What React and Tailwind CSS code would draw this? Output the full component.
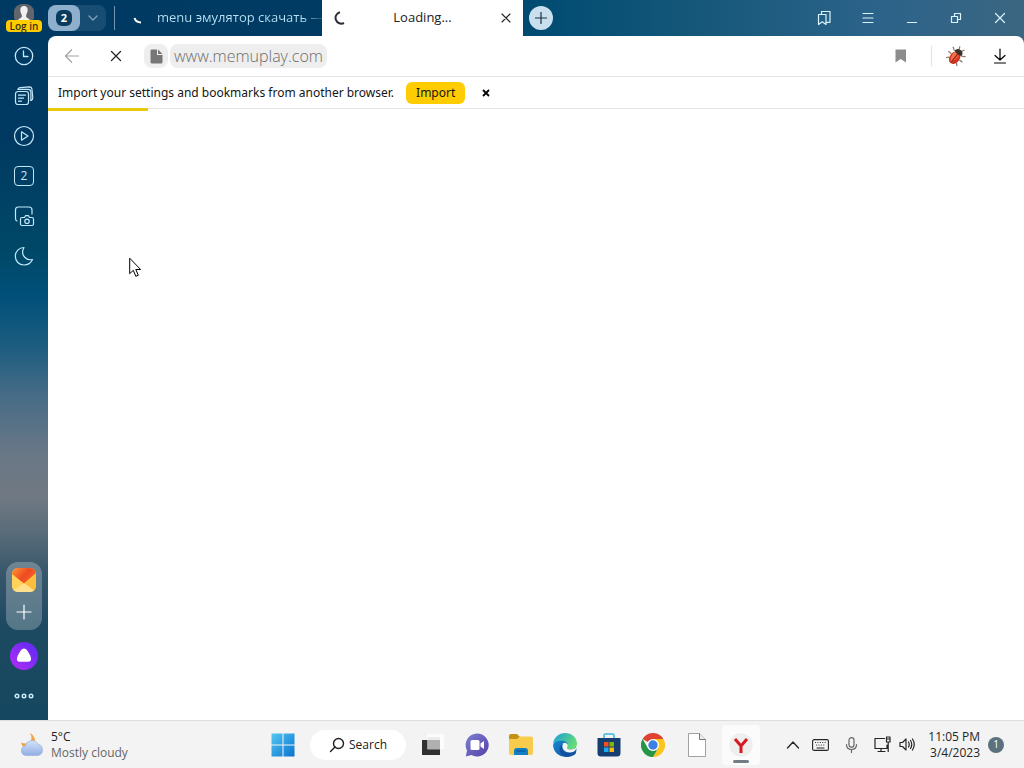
import React from 'react';

const line = { fill: 'none', stroke: 'currentColor', strokeLinecap: 'round', strokeLinejoin: 'round' };

function SideButton({ label, children }) {
  return (
    <button type="button" aria-label={label} className="flex h-10 w-12 items-center justify-center text-[#c4e8fa]">
      {children}
    </button>
  );
}

function Sidebar() {
  return (
    <aside className="flex w-12 shrink-0 flex-col items-center bg-linear-[180deg,#003a63_0%,#003a62_20%,#004867_35%,#00507a_41%,#1c5c7f_48%,#476c87_55%,#697786_63%,#707982_69%,#596b79_74%,#35566a_80%,#1d4a61_87%,#154760_100%]">
      <button type="button" className="flex h-9 w-12 flex-col items-center pt-1">
        <svg width="20" height="16" viewBox="0 0 20 16" aria-hidden="true">
          <path d="M10 0a10 10 0 0 1 8.800 16H1.200A10 10 0 0 1 10 0Z" fill="#62666a" />
          <path d="M10 2c3 0 4 2.500 3.600 5-.3 2-1 3-1.400 3.700V13l4 3H3.800l4-3v-2.300C7.200 10 6.600 9 6.400 7 6 4.500 7 2 10 2Z" fill="#f1f1f1" />
        </svg>
        <span className="h-3 rounded-sm bg-[#ffcc00] px-1 text-[10px] leading-3 font-semibold text-[#35301a]">Log in</span>
      </button>

      <SideButton label="History">
        <svg width="20" height="20" viewBox="0 0 20 20" strokeWidth="1.300" {...line}><circle cx="10" cy="10" r="8.700" /><path d="M9.500 5v5.500H14" /></svg>
      </SideButton>
      <SideButton label="Collections">
        <svg width="20" height="20" viewBox="0 0 20 20" strokeWidth="1.200" {...line}>
          <rect x="1.500" y="5.500" width="13" height="13" rx="2.500" />
          <path d="M4 3.300Q4.300 1.900 6 1.700l9.500-.9q2 0 2.400 2l.9 9q0 2-1.800 2.700" />
          <path d="M4 3.300h10q2.700 0 2.900 2.700v8.500" />
          <path d="M4.500 9.200h7M4.500 12.200h5M4.500 15.200h3" />
        </svg>
      </SideButton>
      <SideButton label="Videos">
        <svg width="22" height="22" viewBox="0 0 22 22" strokeWidth="1.200" {...line}><circle cx="11" cy="11" r="9.500" /><path d="M8.500 6.800v8.400l6.500-4.200Z" /></svg>
      </SideButton>
      <SideButton label="Open tabs">
        <span className="flex size-5 items-center justify-center rounded border border-[#c4e8fa] text-xs">2</span>
      </SideButton>
      <SideButton label="Screenshot">
        <svg width="22" height="22" viewBox="0 0 22 22" strokeWidth="1.200" {...line}>
          <path d="M4 16q-1.500-.5-1.500-2.500V5q0-3 3-3H16q3 0 3 3v4" />
          <path d="M9 12.500h2.500l1-1.800h3l1 1.800H19q1.500 0 1.500 1.500v5q0 1.500-1.500 1.500H9Q7.500 20.500 7.500 19v-5q0-1.500 1.500-1.500Z" />
          <circle cx="14" cy="16.300" r="2.200" />
        </svg>
      </SideButton>
      <SideButton label="Dark mode">
        <svg width="20" height="20" viewBox="0 0 20 20" strokeWidth="1.200" {...line}><path d="M10 1.500C8 5 8.300 8.500 10.500 11s5 3.200 8 2.500C17 16.800 13.800 19 10 19c-5 0-8.700-3.800-8.700-8.700C1.300 5.500 5 1.500 10 1.500Z" /></svg>
      </SideButton>

      <div className="mt-auto flex w-9 flex-col items-center rounded-xl bg-white/25 pt-1.5">
        <button type="button" aria-label="Mail">
          <svg width="24" height="24" viewBox="0 0 24 24">
            <defs>
              <linearGradient id="flap" x1="0" y1="0" x2="1" y2=".6"><stop offset="0" stopColor="#ff9635" /><stop offset=".6" stopColor="#ef4a20" /><stop offset="1" stopColor="#f06a2c" /></linearGradient>
              <clipPath id="mailclip"><rect width="24" height="24" rx="6" /></clipPath>
            </defs>
            <g clipPath="url(#mailclip)">
              <rect width="24" height="24" fill="#ffc53c" />
              <path d="M0 24 12 13l12 11Z" fill="#ffe08c" />
              <path d="M0 6 12 15 0 24Z" fill="#ffd25a" />
              <path d="M24 6 12 15l12 9Z" fill="#ffbd3d" />
              <path d="M0 0h24v5L12 15.500 0 6Z" fill="url(#flap)" />
            </g>
          </svg>
        </button>
        <button type="button" aria-label="Add panel" className="flex h-9.5 w-9 items-center justify-center pt-0.5 text-white">
          <svg width="16" height="16" viewBox="0 0 16 16" strokeWidth="1.200" {...line}><path d="M8 1v14M1 8h14" /></svg>
        </button>
      </div>
      <button type="button" aria-label="Alice" className="mt-3">
        <svg width="28" height="28" viewBox="0 0 28 28">
          <defs><linearGradient id="alice" x1="0" y1="1" x2="1" y2="0"><stop offset="0" stopColor="#b52cf5" /><stop offset="1" stopColor="#592af5" /></linearGradient></defs>
          <circle cx="14" cy="14" r="14" fill="url(#alice)" />
          <path d="M14 6.500c2.300 0 3.600 2.200 5.400 5.400 2 3.600 2.800 7.600-1 7.800-2.600.2-6.200.2-8.800 0-3.800-.2-3-4.200-1-7.800C10.400 8.700 11.700 6.500 14 6.500Z" fill="#fff" />
        </svg>
      </button>
      <button type="button" aria-label="More" className="mt-3 mb-2.5 flex h-7 w-12 items-center justify-center text-[#cdeefa]">
        <svg width="20" height="6" viewBox="0 0 20 6" strokeWidth="1.400" {...line}><circle cx="3" cy="3" r="1.800" /><circle cx="10" cy="3" r="1.800" /><circle cx="17" cy="3" r="1.800" /></svg>
      </button>
    </aside>
  );
}

function WindowButton({ label, children }) {
  return (
    <button type="button" aria-label={label} className="flex h-9 w-11 items-center justify-center">
      <svg width="16" height="16" viewBox="0 0 16 16" strokeWidth="1.200" {...line}>{children}</svg>
    </button>
  );
}

function TabStrip() {
  return (
    <header className="flex h-9 items-center bg-linear-[90deg,#003a62_0%,#003b63_28%,#004b72_50%,#155779_66%,#2c638a_85%,#3b6681_100%] pr-0.5">
      <div className="flex h-6.5 w-[58px] items-center rounded-lg bg-[#174d72]">
        <button type="button" aria-label="Tab group, 2 tabs" className="flex h-full w-8 items-center justify-center rounded-lg bg-[#8eb0cc]">
          <span className="flex size-4 items-center justify-center rounded-md bg-[#083b5d] text-[11px] font-bold text-white">2</span>
        </button>
        <button type="button" aria-label="Tab groups" className="flex flex-1 items-center justify-center text-[#7ea3bf]">
          <svg width="10" height="6" viewBox="0 0 10 6" strokeWidth="1.300" {...line}><path d="m1 1 4 4 4-4" /></svg>
        </button>
      </div>
      <span className="ml-2 h-6 w-px bg-[#7496ae]" />
      <button type="button" className="ml-4 flex h-9 w-[191px] shrink-0 items-center gap-3 text-[13px] text-[#b9e3f5]">
        <svg width="14" height="14" viewBox="0 0 14 14" className="shrink-0" aria-hidden="true"><path d="M3.500 7q1.500 4.500 6.500 4.500" fill="none" stroke="#fff" strokeWidth="2" /></svg>
        <span className="bg-linear-[90deg,#b9e3f5_88%,#35688a_97%] bg-clip-text whitespace-nowrap text-transparent">menu эмулятор скачать —</span>
      </button>
      <div className="flex h-9 w-[201px] shrink-0 items-center bg-white px-2.5 text-[#202124]">
        <svg width="14" height="14" viewBox="0 0 14 14" aria-hidden="true"><path d="M8 1.200A5.800 5.800 0 1 0 12 12" fill="none" stroke="#2a2d35" strokeWidth="2" /></svg>
        <span className="flex-1 text-center text-[13px]">Loading...</span>
        <button type="button" aria-label="Close tab"><svg width="14" height="14" viewBox="0 0 14 14" strokeWidth="1.100" {...line}><path d="m3 3 8 8m0-8-8 8" /></svg></button>
      </div>
      <button type="button" aria-label="New tab" className="ml-1.5 flex size-6 shrink-0 items-center justify-center rounded-full bg-[#c9dfee] text-[#153247]">
        <svg width="12" height="12" viewBox="0 0 12 12" strokeWidth="1.200" {...line}><path d="M6 .5v11M.5 6h11" /></svg>
      </button>
      <div className="ml-auto flex text-[#d8f3fb]">
        <WindowButton label="Bookmarks"><path d="M2.500 4.500h7.500v10l-3.700-2.700-3.800 2.700ZM5.500 4.500v-3h8.500v10.800h-4" /></WindowButton>
        <WindowButton label="Menu"><path d="M3 3.500h10M3 8h10M3 12.500h10" /></WindowButton>
        <WindowButton label="Minimize"><path d="M3.500 12.500h9" /></WindowButton>
        <WindowButton label="Restore"><path d="M3.500 6.500h6v6h-6ZM6.500 6.500v-3h6v6h-3" /></WindowButton>
        <WindowButton label="Close"><path d="m3.500 3.500 9 9m0-9-9 9" /></WindowButton>
      </div>
    </header>
  );
}

function Beetle() {
  return (
    <svg width="20" height="20" viewBox="0 0 20 20" aria-hidden="true">
      <g transform="rotate(38 10 10)">
        <path d="M5.500 7 2 4.500M5 11H1m4.500 4L2.500 18m12-11L18 4.500M15 11h4m-4.500 4 3 3M8.500 3 7 0m4.500 3L13 0" stroke="#8b8277" strokeWidth="1.300" fill="none" />
        <ellipse cx="10" cy="12" rx="5" ry="7" fill="#c9331f" />
        <path d="M6 8Q5.500 14 9.500 18V6.500Z" fill="#f4714c" />
        <path d="M10.500 7v9q2-2 2.500-7" fill="#e85436" />
        <path d="M5.500 6.500Q6 2.500 10 2.500t4.500 4Q10 8.500 5.500 6.500Z" fill="#34332c" />
        <path d="M10 7v11" stroke="#7c2418" strokeWidth=".8" />
      </g>
    </svg>
  );
}

function Toolbar() {
  return (
    <div className="flex h-10 items-center pl-0.5">
      <button type="button" aria-label="Back" className="flex h-10 w-11 items-center justify-center text-[#a3a3a3]">
        <svg width="16" height="16" viewBox="0 0 16 16" strokeWidth="1.200" {...line}><path d="M14.500 8H1.500M7.500 2l-6 6 6 6" /></svg>
      </button>
      <button type="button" aria-label="Stop" className="flex h-10 w-11 items-center justify-center text-[#222]">
        <svg width="12" height="12" viewBox="0 0 12 12" strokeWidth="1.200" {...line}><path d="m1.500 1.500 9 9m0-9-9 9" /></svg>
      </button>
      <button type="button" aria-label="Site information" className="ml-1.5 flex h-6 w-6 items-center justify-center rounded-lg bg-[#eeeeee]">
        <svg width="13" height="15" viewBox="0 0 13 15"><path d="M1.500.5H7V6h5.500v7q0 1.500-1.500 1.500H2Q.5 14.500.5 13V1.500q0-1 1-1Z" fill="#777" /><path d="m8 .5 4.500 4.500H8Z" fill="#777" /></svg>
      </button>
      <input aria-label="Address" readOnly value="www.memuplay.com" className="ml-0.5 h-6 w-[157px] rounded-lg bg-[#eeeeee] px-1 text-[16px] font-light text-[#6c6c6c] outline-none" />
      <div className="ml-auto flex items-center pr-0.5">
        <button type="button" aria-label="Bookmark this page" className="flex h-10 w-11 items-center justify-center">
          <svg width="12" height="14" viewBox="0 0 12 14"><path d="M.5.5h10.500V13.500L5.700 10 .5 13.500Z" fill="#8c8c8c" /></svg>
        </button>
        <span className="ml-2 h-5 w-px bg-[#e2e2e2]" />
        <button type="button" aria-label="Extension" className="ml-0.5 flex h-10 w-11 items-center justify-center"><Beetle /></button>
        <button type="button" aria-label="Downloads" className="flex h-10 w-11 items-center justify-center text-black">
          <svg width="14" height="16" viewBox="0 0 14 16" strokeWidth="1.200" {...line}><path d="M7 1v11M2 7.500 7 12l5-4.500M1.500 15h11" /></svg>
        </button>
      </div>
    </div>
  );
}

function TaskButton({ label, active, children }) {
  return (
    <button type="button" aria-label={label} className="flex h-full w-11 items-center justify-center">
      <span className={active ? 'relative flex h-10 w-9.5 items-center justify-center rounded bg-[#fbfbfb]' : 'flex items-center justify-center'}>
        <svg width="24" height="24" viewBox="0 0 24 24">{children}</svg>
        {active && <span className="absolute bottom-0.5 h-[3px] w-4 rounded-full bg-[#737c84]" />}
      </span>
    </button>
  );
}

function Taskbar() {
  return (
    <footer className="grid h-12 grid-cols-[1fr_auto_1fr] items-center border-t border-[#dedede] bg-[#f3f3f3] text-[#202020]">
      <button type="button" className="flex items-center gap-1.5 pl-5 text-left">
        <svg width="25" height="26" viewBox="0 0 25 26" aria-hidden="true">
          <defs><linearGradient id="cloud" x1="0" y1="0" x2="0" y2="1"><stop offset="0" stopColor="#d3e2fa" /><stop offset="1" stopColor="#91aee2" /></linearGradient></defs>
          <path d="M10 1q4 7-2 10-3 1-7-.5 1 5 6 6 8 0 8-7 0-6-5-8.500Z" fill="#f1a442" />
          <path d="M5.500 23.500a5 5 0 0 1-.3-9.800A7 7 0 0 1 18 12a6 6 0 0 1 .5 11.500Z" fill="url(#cloud)" stroke="#8da9d8" strokeWidth=".5" />
        </svg>
        <span className="text-xs leading-4"><span className="block">5°C</span><span className="block text-[#666]">Mostly cloudy</span></span>
      </button>

      <nav aria-label="Taskbar" className="flex h-full items-center">
        <TaskButton label="Start">
          <defs><linearGradient id="win" x1="0" y1="0" x2="1" y2="1"><stop offset="0" stopColor="#55c7f3" /><stop offset="1" stopColor="#0873ce" /></linearGradient></defs>
          <path d="M.5.5h11v11H.5Zm12 0h11v11h-11Zm-12 12h11v11H.5Zm12 0h11v11h-11Z" fill="url(#win)" />
        </TaskButton>
        <button type="button" className="mx-[5px] flex h-7.5 w-24 items-center justify-center gap-1 rounded-full bg-white text-xs">
          <svg width="16" height="16" viewBox="0 0 16 16" strokeWidth="1.400" {...line}><circle cx="9.500" cy="6.500" r="5" /><path d="m6 10-4.500 4.500" /></svg>
          Search
        </button>
        <TaskButton label="Task view">
          <path d="M6 1h17v15H6Z" fill="#fcfcfc" /><path d="M1 7h18v15H1Z" fill="#303030" /><path d="M6.500 4H19v12H6.500Z" fill="#ececec" /><path d="M6.500 7H19v9.500H6.500Z" fill="#b0b0b0" />
        </TaskButton>
        <TaskButton label="Chat">
          <defs><linearGradient id="chat" x1="0" y1="0" x2="1" y2="1"><stop offset="0" stopColor="#7a80d0" /><stop offset="1" stopColor="#5641a8" /></linearGradient></defs>
          <path d="M12 .5A11.500 11.500 0 1 1 6.500 22L.8 23.500 2 17.500A11.500 11.500 0 0 1 12 .5Z" fill="url(#chat)" />
          <rect x="5.500" y="7" width="9" height="10" rx="1.500" fill="#fff" /><path d="m15.500 10.500 3.500-2.500v8l-3.500-2.500Z" fill="#fff" />
        </TaskButton>
        <TaskButton label="File Explorer">
          <path d="M0 3q0-2 2-2h6l3 3v5H0Z" fill="#c59112" /><path d="M0 6h8l3-2.500h11q2 0 2 2V20q0 2-2 2H2q-2 0-2-2Z" fill="#f7cc4c" />
          <path d="M5 18q0-3 3-3h8q3 0 3 3v4H5Z" fill="#137ec6" /><path d="M7.500 18h9" stroke="#0762a5" strokeWidth="1.500" />
        </TaskButton>
        <TaskButton label="Edge">
          <defs>
            <linearGradient id="edgea" x1="0" y1="0" x2="1" y2=".5"><stop offset="0" stopColor="#199ce1" /><stop offset="1" stopColor="#65dc76" /></linearGradient>
            <linearGradient id="edgeb" x1="0" y1="0" x2="1" y2="1"><stop offset="0" stopColor="#178bd5" /><stop offset="1" stopColor="#174f9d" /></linearGradient>
          </defs>
          <path d="M0 12A12 12 0 0 1 22.500 21Q19 24 13 24 1 23 0 12Z" fill="url(#edgeb)" />
          <path d="M0 11C1 4 6 0 12 0c7 0 12 5 12 10.500 0 4-3 6-6.500 6-3 0-4-1.300-3-2.500 1-1.500.5-5-3.500-6C6 7 1.500 8.500 0 11Z" fill="url(#edgea)" />
          <path d="M9.800 10.500c-2.500 6 2 11 8.500 9.500 2-.5 4-1.500 4.300-1-1.600 2-3.600 3.700-6.600 4.500C8 25 3 17 9.800 10.500Z" fill="#13509d" />
          <path d="M10 10.200q3-1.500 4.500 1 .8 1.500 0 2.800c-1 1.200 0 2.500 3 2.500 2.700 0 5-1 6.300-3.200-.2 3.700-2.600 6.200-6.600 6.200-6.500 0-9-4.500-7.200-9.300Z" fill="#f3f3f3" />
        </TaskButton>
        <TaskButton label="Store">
          <path d="M7 6V2.500Q7 1 8.500 1h7Q17 1 17 2.500V6" fill="none" stroke="#35b8df" strokeWidth="1.500" />
          <path d="M.5 5h23v15q0 3.500-3.500 3.500H4Q.5 23.500.5 20Z" fill="#173e70" />
          <path d="M7 9h4.500v4.500H7Z" fill="#f25022" /><path d="M12.500 9H17v4.500h-4.500Z" fill="#7fba00" /><path d="M7 14.500h4.500V19H7Z" fill="#20a8ed" /><path d="M12.500 14.500H17V19h-4.500Z" fill="#ffb900" />
        </TaskButton>
        <TaskButton label="Chrome">
          <path d="M12 12 1.600 6A12 12 0 0 1 22.400 6Z" fill="#df4133" /><path d="M12 12V6h10.400A12 12 0 0 1 12 24l5.200-9Z" fill="#fac51d" /><path d="M1.600 6 6.800 15l5.200 3 5.200-3L12 24A12 12 0 0 1 1.600 6Z" fill="#279547" />
          <circle cx="12" cy="12" r="6" fill="#fff" /><circle cx="12" cy="12" r="4.700" fill="#3e7fe5" />
        </TaskButton>
        <TaskButton label="Document">
          <path d="M3.500.5h11l6 6v17h-17Z" fill="#fff" stroke="#8b8b8b" strokeWidth=".8" /><path d="M14.500.5v6h6" fill="#eee" stroke="#555" strokeWidth=".8" />
        </TaskButton>
        <TaskButton label="Yandex Browser" active>
          <circle cx="12" cy="12" r="11.700" fill="#eee" /><path d="m6 6 6 7 6-7M12 12.500V20" fill="none" stroke="#d5191e" strokeWidth="3" />
        </TaskButton>
      </nav>

      <div className="flex items-center justify-end pr-5 text-xs text-[#252525]">
        <button type="button" aria-label="Show hidden icons" className="mr-3"><svg width="14" height="10" viewBox="0 0 14 10" strokeWidth="1.300" {...line}><path d="m1.500 8 5.500-6 5.500 6" /></svg></button>
        <button type="button" aria-label="Touch keyboard" className="mr-4">
          <svg width="17" height="12" viewBox="0 0 17 12" strokeWidth="1.100" {...line}><rect x=".6" y=".6" width="15.800" height="10.800" rx="1.500" /><path d="M3.500 3.500h.1m2.300 0h.1m2.300 0h.1m2.300 0h.1m2.300 0h.1M4.500 6h.1m2.300 0h.1m2.300 0h.1m2.300 0h.1M5 9h7" /></svg>
        </button>
        <button type="button" aria-label="Microphone" className="mr-4 text-[#666]">
          <svg width="13" height="16" viewBox="0 0 13 16" strokeWidth="1.200" {...line}><rect x="4" y=".7" width="5" height="9.500" rx="2.500" /><path d="M1.500 7.500q0 5 5 5t5-5M6.500 12.500v3" /></svg>
        </button>
        <button type="button" aria-label="Network and volume" className="mr-3 flex items-center gap-2">
          <svg width="17" height="17" viewBox="0 0 17 17" strokeWidth="1.200" {...line}><path d="M10.500 2.500H1v10h12V9M4 15.500h7M7 12.500v3M12.500 1h3.500v5h-3.500ZM14.200 6v9.500M13.500 3h1.500" /></svg>
          <svg width="17" height="15" viewBox="0 0 17 15" strokeWidth="1.200" {...line}><path d="M1 5.500h2.500L7 2v11L3.500 9.500H1ZM9.500 5q1.500 2.500 0 5m2-6.500q2.500 4 0 8m2-9.500q3.500 5.500 0 11" /></svg>
        </button>
        <button type="button" className="text-right leading-4 whitespace-nowrap"><span className="block">11:05 PM</span><span className="block">3/4/2023</span></button>
        <button type="button" aria-label="1 notification" className="ml-2 flex size-4 items-center justify-center rounded-full bg-[#5b727e] text-[10px] text-white">1</button>
      </div>
    </footer>
  );
}

export default function App() {
  return (
    <div className="flex min-h-screen flex-col bg-white font-['Open_Sans','Noto_Sans',sans-serif]">
      <div className="flex flex-1">
        <Sidebar />
        <div className="flex min-w-0 flex-1 flex-col bg-linear-[90deg,#003a62,#3b6681]">
          <TabStrip />
          <main className="relative flex-1 rounded-t-lg bg-white">
            <Toolbar />
            <section className="relative flex h-[33px] items-center border-y border-[#e3e3e3] pl-2.5 font-['Noto_Sans',sans-serif] text-xs text-[#151515]">
              <span className="whitespace-nowrap">Import your settings and bookmarks from another browser.</span>
              <button type="button" className="ml-3 h-[22px] rounded-md bg-[#ffcc00] px-2.5">Import</button>
              <button type="button" aria-label="Dismiss" className="ml-4 text-black"><svg width="10" height="10" viewBox="0 0 10 10"><path d="m2 2 6 6m0-6L2 8" stroke="currentColor" strokeWidth="1.800" /></svg></button>
              <span className="absolute top-full left-0 h-[3px] w-[100px] bg-[#eac90b]" />
            </section>
            <svg width="14" height="21" viewBox="0 0 14 21" className="absolute top-[221px] left-[81px]" aria-hidden="true">
              <path d="M.7 1.200v15.500l3.600-3.400 2.500 6 2.500-1-2.500-5.800h4.800Z" fill="#fff" stroke="#000" strokeWidth="1" />
            </svg>
          </main>
        </div>
      </div>
      <Taskbar />
    </div>
  );
}
